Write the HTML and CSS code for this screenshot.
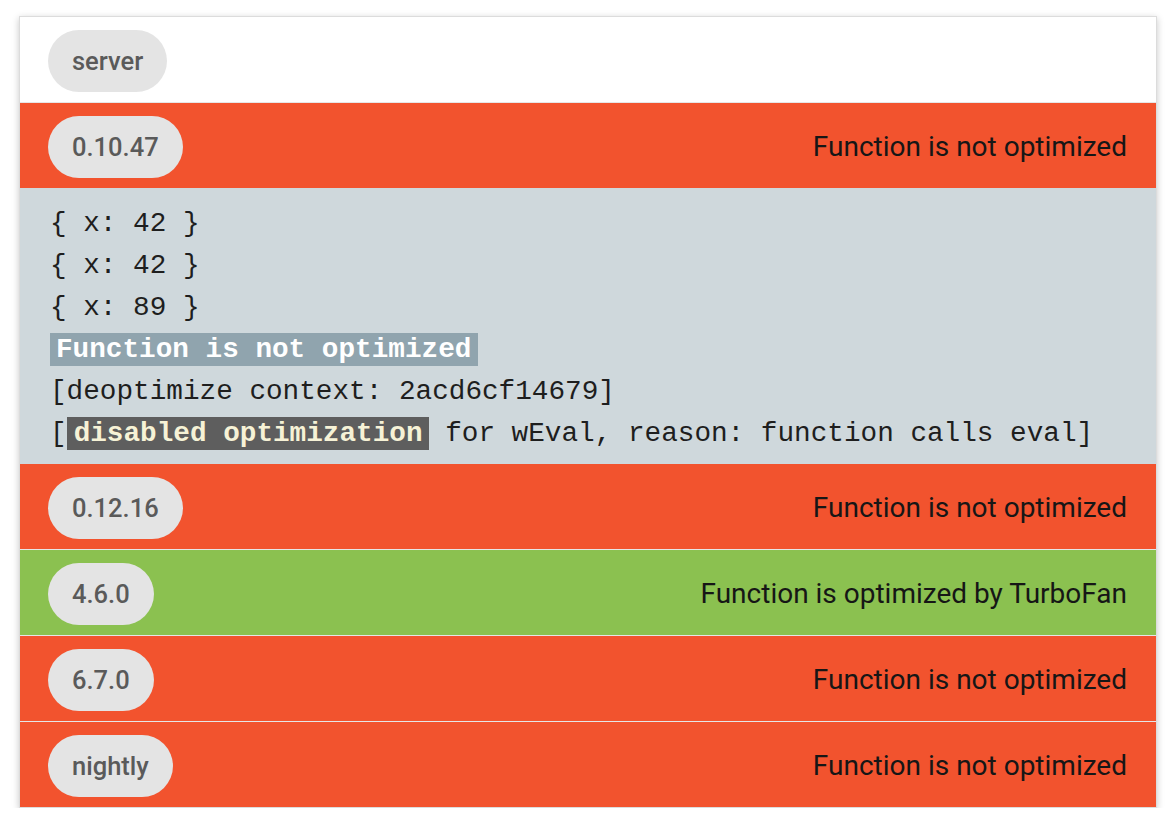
FILE: index.html
```html
<!DOCTYPE html>
<html>
<head>
<meta charset="utf-8">
<link rel="stylesheet" href="styles.css">
</head>
<body>
<div class="card">
  <div class="row row-white">
    <span class="pill">server</span>
  </div>
  <div class="row row-red">
    <span class="pill">0.10.47</span>
    <span class="status">Function is not optimized</span>
  </div>
  <div class="code">
    <div class="line">{ x: 42 }</div>
    <div class="line">{ x: 42 }</div>
    <div class="line">{ x: 89 }</div>
    <div class="line"><span class="hl-info">Function is not optimized</span></div>
    <div class="line">[deoptimize context: 2acd6cf14679]</div>
    <div class="line">[<span class="hl-dark">disabled optimization</span> for wEval, reason: function calls eval]</div>
  </div>
  <div class="row row-red no-border">
    <span class="pill">0.12.16</span>
    <span class="status">Function is not optimized</span>
  </div>
  <div class="row row-green">
    <span class="pill">4.6.0</span>
    <span class="status">Function is optimized by TurboFan</span>
  </div>
  <div class="row row-red">
    <span class="pill">6.7.0</span>
    <span class="status">Function is not optimized</span>
  </div>
  <div class="row row-red">
    <span class="pill">nightly</span>
    <span class="status">Function is not optimized</span>
  </div>
</div>
</body>
</html>
```

FILE: styles.css
```css
html, body {
  margin: 0;
  padding: 0;
  background: #ffffff;
}
body {
  font-family: Roboto, "Liberation Sans", sans-serif;
}
.card {
  margin: 16px 17px 0 19px;
  border: 1px solid #dcdcdc;
  box-shadow: 0 2px 7px rgba(0, 0, 0, 0.22);
  background: #fff;
}
.row {
  display: flex;
  align-items: center;
  justify-content: space-between;
  padding: 13px 29px 10px 28px;
  border-top: 1px solid #e6e6e6;
}
.row-white {
  border-top: none;
  background: #ffffff;
}
.row-red {
  background: #f2532e;
}
.row-green {
  background: #8bc150;
}
.no-border {
  border-top: none;
}
.pill {
  display: inline-block;
  background: #e4e4e4;
  color: #5a5a5a;
  font-weight: 500;
  font-size: 25.5px;
  line-height: 36px;
  padding: 13px 24px;
  border-radius: 31px;
}
.status {
  color: #161616;
  font-size: 28px;
  line-height: 36px;
}
.code {
  background: #cfd8dc;
  padding: 15px 30px 9px 30px;
  font-family: "Liberation Mono", "Courier New", monospace;
  font-size: 27.7px;
  line-height: 42px;
  color: #1e1e1e;
}
.line {
  white-space: pre;
  height: 42px;
}
.hl-info {
  background: #90a4ae;
  color: #ffffff;
  font-weight: bold;
  padding: 1px 7px 1px 6px;
}
.hl-dark {
  background: #5e5e5e;
  color: #f6f2d6;
  font-weight: bold;
  padding: 1px 6px 1px 7px;
}
```
